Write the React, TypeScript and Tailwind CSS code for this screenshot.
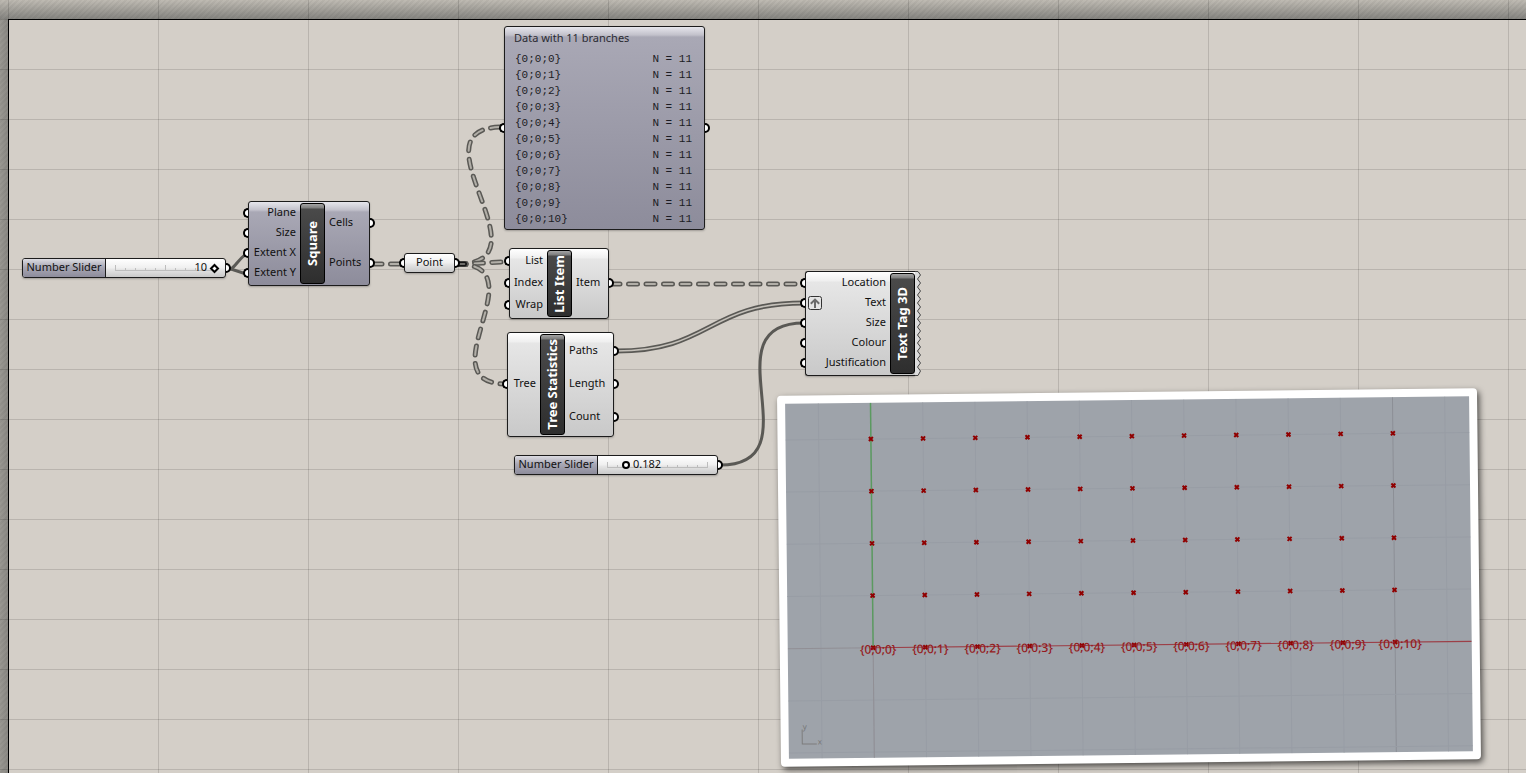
import React from 'react';

type Tone = 'light' | 'dim';

const capsule =
  'absolute flex rounded-[3px] border border-[#1c1c1c] font-["Noto_Sans",sans-serif] text-[11px] leading-4 text-[#111] shadow-[0_1px_2px_rgba(0,0,0,0.25)]';

const tones: Record<Tone, string> = {
  light: 'bg-[linear-gradient(#ffffff_0px,#efefef_9px,#e6e6e6_10px,#c9c9c9_100%)]',
  dim: 'bg-[linear-gradient(#e6e6ec_0px,#c2c1cb_8px,#a9a8b5_10px,#8d8c9b_100%)]',
};

function Port({ side }: { side: 'left' | 'right' }) {
  const place =
    side === 'left'
      ? '-left-[6px] rounded-l-full border-r-0'
      : '-right-[6px] rounded-r-full border-l-0';
  return (
    <span
      aria-hidden="true"
      className={`absolute top-1/2 h-[10px] w-[5px] -translate-y-1/2 border-2 border-black bg-white ${place}`}
    />
  );
}

interface NodeProps {
  name: string;
  inputs: string[];
  outputs: string[];
  place: string;
  pad: string;
  inputWidth: string;
  tone: Tone;
  grafted?: string;
}

function Component({ name, inputs, outputs, place, pad, inputWidth, tone, grafted }: NodeProps) {
  return (
    <section aria-label={name} className={`${capsule} ${tones[tone]} ${place}`}>
      <ul className={`flex flex-col ${inputWidth} ${pad}`}>
        {inputs.map((label) => (
          <li key={label} className="relative flex flex-1 items-center justify-end pr-1">
            <Port side="left" />
            {grafted === label && <GraftMark />}
            <span className="pb-[2px] whitespace-nowrap">{label}</span>
          </li>
        ))}
      </ul>
      <h2 className="my-px flex w-[25px] items-center justify-center rounded-[3px] border border-black bg-[linear-gradient(#a5a5a5_0px,#7c7c7c_4px,#4a4a4a_5px,#2e2e2e_100%)] text-[13px] leading-none font-bold text-white">
        <span className="rotate-180 whitespace-nowrap [writing-mode:vertical-rl]">{name}</span>
      </h2>
      {outputs.length > 0 && (
        <ul className={`flex flex-1 flex-col ${pad}`}>
          {outputs.map((label) => (
            <li key={label} className="relative flex flex-1 items-center pl-1">
              <span className="pb-[2px]">{label}</span>
              <Port side="right" />
            </li>
          ))}
        </ul>
      )}
    </section>
  );
}

function GraftMark() {
  return (
    <svg viewBox="0 0 14 14" className="absolute left-[2px] size-[14px]" aria-hidden="true">
      <rect x="0.5" y="0.5" width="13" height="13" rx="2" fill="#e4e4e4" stroke="#333" />
      <path d="M7 4V12M2.8 7.8L7 3.6L11.2 7.8" fill="none" stroke="#6a6a6a" strokeWidth="2" />
    </svg>
  );
}

function NumberSlider({
  id,
  value,
  position,
  place,
  thumb,
  readout,
}: {
  id: string;
  value: string;
  position: number;
  place: string;
  thumb: string;
  readout: string;
}) {
  return (
    <div className={`${capsule} ${tones.light} h-[20px] w-[204px] ${place}`}>
      <label
        htmlFor={id}
        className="flex w-[83px] items-center justify-center rounded-l-[2px] border-r border-[#1c1c1c] bg-[linear-gradient(#dcdce2_0px,#a9a8b5_8px,#8d8c9b_100%)] pb-[2px]"
      >
        Number Slider
      </label>
      <div className="relative flex flex-1 items-center px-[7px]">
        <svg viewBox="0 0 101 6" className="absolute left-[9px] h-[6px] w-[101px]" aria-hidden="true">
          <path
            d="M0.5 0V6M10.5 3V6M20.5 3V6M30.5 3V6M40.5 3V6M50.5 0V6M60.5 3V6M70.5 3V6M80.5 3V6M90.5 3V6M100.5 0V6M0 5.5H101"
            stroke="#bdbdbd"
            fill="none"
          />
        </svg>
        <input
          id={id}
          type="range"
          min={0}
          max={100}
          defaultValue={position}
          className={`relative h-4 w-full appearance-none bg-transparent [&::-webkit-slider-thumb]:appearance-none [&::-webkit-slider-thumb]:border-2 [&::-webkit-slider-thumb]:border-black [&::-webkit-slider-thumb]:bg-white ${thumb}`}
        />
        <output htmlFor={id} className={`absolute pb-[2px] ${readout}`}>
          {value}
        </output>
      </div>
      <span className="absolute inset-y-0 right-0">
        <Port side="right" />
      </span>
    </div>
  );
}

const branches = Array.from({ length: 11 }, (_, i) => `{0;0;${i}}`);

function DataPanel() {
  return (
    <section className={`${capsule} ${tones.dim} top-[26px] left-[504px] h-[204px] w-[201px] flex-col`}>
      <span className="absolute inset-y-0 left-0">
        <Port side="left" />
      </span>
      <span className="absolute inset-y-0 right-0">
        <Port side="right" />
      </span>
      <h2 className="px-[9px] pt-[3px] text-[#2b2b33]">Data with 11 branches</h2>
      <table className='mx-[10px] mt-[5px] font-["Liberation_Mono",monospace] text-[11px] leading-4 text-[#1c1c24]'>
        <tbody>
          {branches.map((path) => (
            <tr key={path}>
              <td className="p-0">{path}</td>
              <td className="p-0 pr-[2px] text-right">N = 11</td>
            </tr>
          ))}
        </tbody>
      </table>
    </section>
  );
}

const listWires = [
  'M373 264H404',
  'M457 264C553 264 407 127 503 127',
  'M457 264C480 264 485 262 508 262',
  'M457 264C541 264 423 384 507 384',
  'M611 284H804',
];

function Wires() {
  return (
    <svg className="absolute top-0 left-0 h-[773px] w-[1526px]" viewBox="0 0 1526 773" fill="none" aria-hidden="true">
      {listWires.map((d) => (
        <g key={d} strokeLinecap="round" strokeDasharray="9 8.5">
          <path d={d} stroke="#5a5955" strokeWidth="5" />
          <path d={d} stroke="#b2afa8" strokeWidth="2" />
        </g>
      ))}
      <g strokeLinecap="round">
        <path d="M457 264H464.5" stroke="#151515" strokeWidth="5" />
        <path d="M457 264H464.5" stroke="#8c8a85" strokeWidth="1.6" />
      </g>
      <path d="M616 351C712 351 707 303 804 303" stroke="#5a5955" strokeWidth="5" />
      <path d="M616 351C712 351 707 303 804 303" stroke="#c4c0b9" strokeWidth="1.6" />
      <g stroke="#5a5955" strokeWidth="3">
        <path d="M720 465C817 465 706 323 804 323" />
        <path d="M227 269H231C236 266 240 257 248 253" />
        <path d="M227 269H231L243 273H248" />
      </g>
    </svg>
  );
}

const pitch = 52.2;
const originX = 85.4;
const originY = 245;
const columns = Array.from({ length: 11 }, (_, i) => i);

function Viewport() {
  return (
    <figure className="absolute top-[392px] left-[779px] h-[371px] w-[700px] rotate-[-0.62deg] rounded-[4px] border-8 border-white bg-[#9ea3aa] shadow-[2px_3px_6px_rgba(0,0,0,0.65)]">
      <svg viewBox="0 0 684 355" className="size-full" role="img" aria-label="Point grid with branch paths">
        {[-1, ...columns, 11].map((c) => (
          <path key={c} d={`M${originX + c * pitch} 0V355`} stroke={c === 10 ? '#8c8f96' : '#989da5'} />
        ))}
        {[-2, -1, 1, 2, 3, 4].map((r) => (
          <path key={r} d={`M0 ${originY - r * pitch}H684`} stroke="#989da5" />
        ))}
        <path d={`M0 ${originY}H${originX}M${originX} ${originY}V355`} stroke="#918f95" />
        <path d={`M${originX} 0V${originY}`} stroke="#5b9a60" strokeWidth="1.5" />
        <path d={`M${originX} ${originY}H684`} stroke="#9c3f47" strokeWidth="1.2" />
        {columns.flatMap((c) =>
          [0, 1, 2, 3, 4].map((r) => {
            const x = originX + c * pitch;
            const y = originY - r * pitch;
            return (
              <path
                key={`${c}-${r}`}
                d={`M${x - 2} ${y - 2}L${x + 2} ${y + 2}M${x + 2} ${y - 2}L${x - 2} ${y + 2}`}
                stroke="#900000"
                strokeWidth="2"
              />
            );
          }),
        )}
        {columns.map((c) => (
          <text
            key={c}
            x={originX + 5 + c * pitch}
            y={originY + 6}
            textAnchor="middle"
            className='fill-[#951a20] font-["Noto_Sans",sans-serif] text-[12px] font-medium'
          >
            {branches[c]}
          </text>
        ))}
        <path d="M13.5 326V340.5H28" stroke="#7d7d7d" fill="none" />
        <text x="14" y="326" className='fill-[#777] font-["Noto_Sans",sans-serif] text-[8px]'>y</text>
        <text x="29" y="341" className='fill-[#777] font-["Noto_Sans",sans-serif] text-[8px]'>x</text>
      </svg>
    </figure>
  );
}

function TornEdge() {
  return (
    <svg viewBox="0 0 6 105" className="absolute top-[271px] left-[915px] h-[105px] w-[6px]" aria-hidden="true">
      <path
        d="M0 0.5H3L5.5 4L2.5 8L5.5 12L2.5 16L5.5 20L2.5 24L5.5 28L2.5 32L5.5 36L2.5 40L5.5 44L2.5 48L5.5 52L2.5 56L5.5 60L2.5 64L5.5 68L2.5 72L5.5 76L2.5 80L5.5 84L2.5 88L5.5 92L2.5 96L5.5 100L3 104.5H0"
        fill="#dcdcdc"
        stroke="#444"
      />
    </svg>
  );
}

export default function App() {
  return (
    <main className="relative h-screen w-full overflow-hidden bg-[#d4cfc8]">
      <div className="absolute inset-x-0 top-0 h-[19px] bg-[repeating-linear-gradient(135deg,rgba(0,0,0,0.04)_0px,rgba(0,0,0,0.04)_2px,transparent_2px,transparent_4px),linear-gradient(#bfbbb3,#858480)]" />
      <div className="absolute top-[19px] bottom-0 left-0 w-[8px] bg-[repeating-linear-gradient(135deg,rgba(0,0,0,0.04)_0px,rgba(0,0,0,0.04)_2px,transparent_2px,transparent_4px),linear-gradient(90deg,#9a9892,#8a8883)]" />
      <div className="absolute inset-0 bg-[linear-gradient(rgba(0,0,0,0.13)_1px,transparent_1px),linear-gradient(90deg,rgba(0,0,0,0.13)_1px,transparent_1px)] bg-[length:100%_50px,150px_100%] bg-[position:0_19px,8px_0]" />
      <div className="absolute top-[19px] right-0 bottom-0 left-[8px] border-t border-l border-black" />

      <Wires />
      <DataPanel />
      <NumberSlider
        id="extent"
        value="10"
        position={100}
        place="top-[258px] left-[22px]"
        thumb="[&::-webkit-slider-thumb]:size-[7px] [&::-webkit-slider-thumb]:rotate-45"
        readout="right-[18px]"
      />
      <Component
        name="Square"
        tone="dim"
        place="top-[201px] left-[248px] h-[85px] w-[122px]"
        pad="pt-px pb-[2px]"
        inputWidth="w-[51px]"
        inputs={['Plane', 'Size', 'Extent X', 'Extent Y']}
        outputs={['Cells', 'Points']}
      />
      <div className={`${capsule} ${tones.light} top-[253px] left-[404px] h-[20px] w-[51px] items-center justify-center`}>
        <span className="absolute inset-y-0 left-0">
          <Port side="left" />
        </span>
        <span className="pb-[2px]">Point</span>
        <span className="absolute inset-y-0 right-0">
          <Port side="right" />
        </span>
      </div>
      <Component
        name="List Item"
        tone="light"
        place="top-[248px] left-[509px] h-[71px] w-[100px]"
        pad="pt-px pb-[2px]"
        inputWidth="w-[37px]"
        inputs={['List', 'Index', 'Wrap']}
        outputs={['Item']}
      />
      <Component
        name="Tree Statistics"
        tone="light"
        place="top-[332px] left-[507px] h-[105px] w-[107px]"
        pad="pt-px pb-[3px]"
        inputWidth="w-8"
        inputs={['Tree']}
        outputs={['Paths', 'Length', 'Count']}
      />
      <NumberSlider
        id="size"
        value="0.182"
        position={18}
        place="top-[455px] left-[514px]"
        thumb="[&::-webkit-slider-thumb]:size-[8px] [&::-webkit-slider-thumb]:rounded-full"
        readout="left-[35px]"
      />
      <Component
        name="Text Tag 3D"
        tone="light"
        place="top-[271px] left-[805px] h-[105px] w-[110px] rounded-r-none border-r-0"
        pad="pt-px pb-[2px]"
        inputWidth="w-[84px]"
        inputs={['Location', 'Text', 'Size', 'Colour', 'Justification']}
        outputs={[]}
        grafted="Text"
      />
      <TornEdge />
      <Viewport />
    </main>
  );
}
